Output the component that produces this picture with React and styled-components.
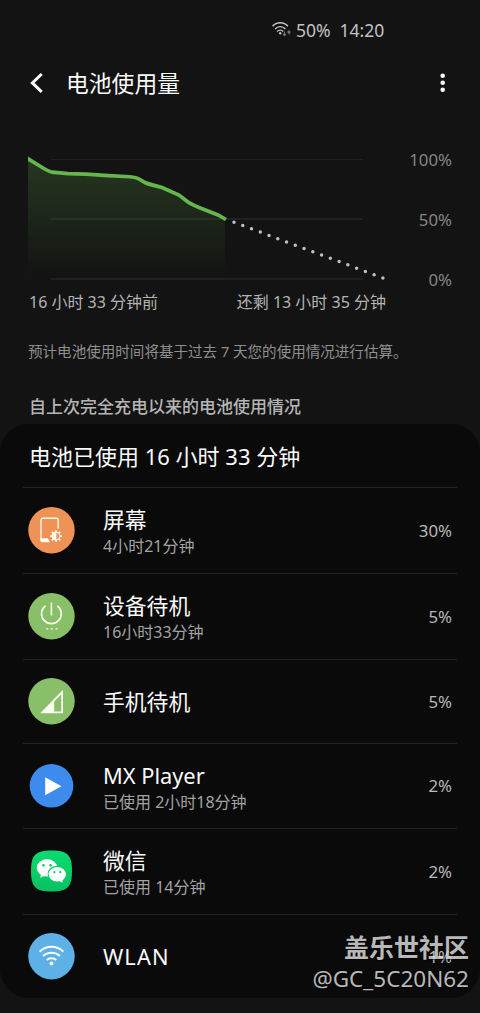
import React from "react"
import styled, { createGlobalStyle } from "styled-components"

const GlobalStyle = createGlobalStyle`
    * {
        box-sizing: border-box;
    }

    body {
        margin: 0;
        background: #131313;
        color: #fafafa;
        font-family: "Noto Sans", "Noto Sans CJK SC", sans-serif;
    }
`

const Screen = styled.div`
    position: relative;
    width: 480px;
    height: 1013px;
    overflow: hidden;
    background: #131313;
    white-space: nowrap;
`

const StatusBar = styled.div`
    display: flex;
    align-items: center;
    height: 60px;
    padding: 0 0 0 272px;
    font-size: 17.5px;
    color: #c2c2c2;
`

const StatusText = styled.span`
    margin-left: ${props => props.$gap}px;
`

const Header = styled.header`
    display: flex;
    align-items: center;
    height: 46px;
    padding: 0 33px 0 29px;
`

const Title = styled.h1`
    flex: 1;
    margin: 0 0 0 21px;
    padding-top: 1px;
    font-size: 22.8px;
    font-weight: 400;
    line-height: 46px;
`

const ChartSection = styled.section`
    display: flex;
    justify-content: space-between;
    height: 182px;
    padding: 44px 28px 0 28px;
`

const ChartColumn = styled.div`
    width: 360px;
`

const ChartSvg = styled.svg`
    display: block;
`

const TimeLabels = styled.div`
    display: flex;
    justify-content: space-between;
    padding: 0 2px 0 1px;
    font-size: 16px;
    line-height: 24px;
    color: #b4b4b4;
`

const Scale = styled.div`
    display: flex;
    flex-direction: column;
    justify-content: space-between;
    height: 144px;
    margin-top: -2px;
    font-size: 16.8px;
    line-height: 24px;
    text-align: right;
    color: #858585;
`

const Note = styled.p`
    margin: 0;
    padding: 51px 28px 1px;
    font-size: 14.55px;
    line-height: 24px;
    color: #8f8f8f;
`

const SectionTitle = styled.h2`
    margin: 0;
    padding: 30px 29px 5px;
    font-size: 17px;
    font-weight: 500;
    line-height: 25px;
    color: #b5b5b5;
`

const Card = styled.main`
    height: 574px;
    padding: 0 23px;
    border-radius: 29px;
    background: #0a0a0a;
`

const CardTitle = styled.h3`
    height: 64px;
    margin: 0;
    padding-left: 6px;
    border-bottom: 1px solid #232323;
    font-size: 22px;
    font-weight: 400;
    line-height: 64px;
`

const Row = styled.div`
    display: flex;
    align-items: center;
    height: ${props => props.$height}px;
    padding: 0 5px;
    border-bottom: 1px solid ${props => props.$last ? "transparent" : "#232323"};
`

const IconSvg = styled.svg`
    flex: none;
    display: block;
`

const RowText = styled.div`
    flex: 1;
    margin-left: 28px;
    padding-top: ${props => props.$twoLines ? 3 : 0}px;
`

const AppName = styled.div`
    font-size: 21.8px;
    line-height: 28px;
    letter-spacing: ${props => props.$spacing || 0}px;
`

const AppTime = styled.div`
    font-size: 16px;
    line-height: 24px;
    color: #a3a3a3;
`

const Percent = styled.div`
    font-size: 16.8px;
    line-height: 24px;
    color: #b8b8b8;
`

const Watermark = styled.div`
    position: absolute;
    right: 11px;
    top: 930px;
    text-align: right;
    color: rgba(255, 255, 255, 0.72);
    text-shadow: 1px 1px 1px rgba(0, 0, 0, 0.5);
`

const Community = styled.div`
    font-size: 25px;
    font-weight: 700;
    line-height: 34px;
`

const UserName = styled.div`
    font-size: 22.5px;
    line-height: 30px;
`

const StatusWifi = () => (
    <IconSvg width="20" height="16" viewBox="0 0 20 16" fill="none" stroke="#c2c2c2" strokeWidth="1.4">
        <path d="M.6 4.2C4.5-.4 12-.4 15.8 4.2M3 7c2.800-3.200 7.600-3.200 10.400 0M5.200 9.500c1.700-1.900 4.300-1.900 6 0" />
        <circle cx="8.2" cy="11.2" r="1.2" fill="#c2c2c2" stroke="none" />
        <path d="M12.500 9.500v4M11 12l1.500 1.500 1.500-1.500M17 12.500V9M15.500 10.500L17 9l1.500 1.500" stroke="#707070" strokeWidth="1.3" />
    </IconSvg>
)

const BackIcon = () => (
    <IconSvg width="16" height="24" viewBox="0 0 16 24" fill="none" stroke="#fafafa" strokeWidth="3">
        <path d="M12.700 3L3.400 11.900l9.300 8.900" />
    </IconSvg>
)

const MoreIcon = () => (
    <IconSvg width="8" height="20" viewBox="0 0 8 20" fill="#fafafa">
        <circle cx="3.7" cy="2.7" r="2.3" />
        <circle cx="3.7" cy="9.7" r="2.3" />
        <circle cx="3.7" cy="16.8" r="2.3" />
    </IconSvg>
)

const ScreenIcon = () => (
    <IconSvg width="47" height="47" viewBox="0 0 47 47">
        <circle cx="23.5" cy="23.2" r="23.2" fill="#ef9255" />
        <path d="M30.200 21.500V13q0-1.700-1.700-1.700H14.700q-1.700 0-1.700 1.700v20" fill="none" stroke="#fff7e8" strokeWidth="1.4" />
        <path d="M12.300 31.300h7.500l2.200 3.900H14q-1.700 0-1.700-1.700z" fill="#fffaf0" />
        <path d="M28 23.200V35M22.100 29.100h11.800M23.800 24.900l8.400 8.400M32.200 24.900l-8.400 8.400" stroke="#fffaf0" strokeWidth="1.7" />
        <circle cx="28" cy="29.1" r="4.5" fill="#fffaf0" />
        <path d="M28.300 26a3.100 3.100 0 010 6.200z" fill="#ef9255" />
    </IconSvg>
)

const PowerIcon = () => (
    <IconSvg width="47" height="47" viewBox="0 0 47 47" fill="none" stroke="#f7fbe8" strokeWidth="1.6">
        <circle cx="23.5" cy="23.2" r="23.2" fill="#89bf69" stroke="none" />
        <path d="M17.500 12.800a9.900 9.900 0 1011.800 0M23.400 9.500v13" />
        <path d="M18.200 35.800h2M22.700 35.800h2M27.500 35.800h2" strokeWidth="1.2" />
    </IconSvg>
)

const SignalIcon = () => (
    <IconSvg width="47" height="47" viewBox="0 0 47 47">
        <circle cx="23.5" cy="23.2" r="23.2" fill="#89bf69" />
        <path d="M12.200 35.200L35 11.700v23.500z" fill="#fafcf0" />
        <path d="M26.200 23.600l7-7v17h-7z" fill="#89bf69" />
    </IconSvg>
)

const PlayerIcon = () => (
    <IconSvg width="47" height="47" viewBox="0 0 47 47">
        <circle cx="23.5" cy="22.8" r="21.8" fill="#3d8bed" />
        <path d="M17.200 14.300L33.500 23.300 17.200 32.300z" fill="#fff" />
    </IconSvg>
)

const WechatIcon = () => (
    <IconSvg width="47" height="47" viewBox="0 0 47 47">
        <defs>
            <linearGradient id="wechat" x1="0" y1="0" x2="0" y2="1">
                <stop offset="0" stopColor="#08dc70" />
                <stop offset="1" stopColor="#08c160" />
            </linearGradient>
        </defs>
        <path d="M23.500 2.500C39.500 2.500 44 7 44 23S39.500 43.500 23.500 43.500 3 39 3 23 7.500 2.500 23.500 2.500z" fill="url(#wechat)" />
        <ellipse cx="19" cy="19.8" rx="10.3" ry="8.7" fill="#fff" />
        <path d="M13 25.500l-.7 4.200 5-2.200z" fill="#fff" />
        <ellipse cx="29.1" cy="26" rx="9.5" ry="8.2" fill="#08ce68" />
        <ellipse cx="29.3" cy="26.3" rx="8.7" ry="7.3" fill="#fff" />
        <path d="M30.500 32.500l4.200 2.200-.7-4z" fill="#fff" />
        <g fill="#08ce68">
            <circle cx="15.5" cy="17.2" r="1.3" />
            <circle cx="22.5" cy="17.2" r="1.3" />
            <circle cx="26.4" cy="24.2" r="1.1" />
            <circle cx="32.2" cy="24.2" r="1.1" />
        </g>
    </IconSvg>
)

const WlanIcon = () => (
    <IconSvg width="47" height="47" viewBox="0 0 47 47" fill="none" stroke="#f8fcff" strokeWidth="2">
        <circle cx="23.5" cy="23.2" r="23.2" fill="#5eb1e7" stroke="none" />
        <path d="M11.600 18.800c6.600-6.600 17.200-6.600 23.800 0M15 23c4.700-4.500 12.300-4.500 17 0M18.700 27c2.700-2.300 6.900-2.300 9.600 0" />
        <circle cx="23.5" cy="30.5" r="1.9" fill="#fff" stroke="none" />
    </IconSvg>
)

const BatteryChart = () => (
    <ChartSvg width="360" height="140" viewBox="0 0 360 140">
        <defs>
            <linearGradient id="usage" x1="0" y1="0" x2="0" y2="1">
                <stop offset="0" stopColor="#62b548" stopOpacity=".23" />
                <stop offset="1" stopColor="#62b548" stopOpacity="0" />
            </linearGradient>
        </defs>
        <path d="M23 9.500H335" stroke="#202020" />
        <path d="M23 69H335M23 129H335" stroke="#202020" strokeWidth="2" />
        <path d="M0 9L22 22 110 28 135 36 151 44 162 53 197 69V127H0z" fill="url(#usage)" />
        <path
            d="M-2 7.500L11 15.500Q20 21.200 24 22.200L40 23.700L58 24.200L80 25.700L97 26.500Q108 27 111 29L118 33Q120 34 134 37.500L151 45L160 52Q163 54 171 57.500L190 65L198 69.500"
            fill="none"
            stroke="#65b64c"
            strokeWidth="3.7"
        />
        <path d="M206 72.300L355.500 128.200" stroke="#bac2c7" strokeWidth="3.5" strokeLinecap="round" strokeDasharray="0 9.35" />
    </ChartSvg>
)

const apps = [
    { name: "屏幕", time: "4小时21分钟", percent: "30%", icon: <ScreenIcon />, height: 86 },
    { name: "设备待机", time: "16小时33分钟", percent: "5%", icon: <PowerIcon />, height: 86 },
    { name: "手机待机", percent: "5%", icon: <SignalIcon />, height: 84 },
    { name: "MX Player", time: "已使用 2小时18分钟", percent: "2%", icon: <PlayerIcon />, height: 85 },
    { name: "微信", time: "已使用 14分钟", percent: "2%", icon: <WechatIcon />, height: 86 },
    { name: "WLAN", percent: "1%", icon: <WlanIcon />, height: 84, spacing: 1.1, last: true },
]

const App = () => (
    <>
        <GlobalStyle />
        <Screen>
            <StatusBar>
                <StatusWifi />
                <StatusText $gap={4}>50%</StatusText>
                <StatusText $gap={9}>14:20</StatusText>
            </StatusBar>
            <Header>
                <BackIcon />
                <Title>电池使用量</Title>
                <MoreIcon />
            </Header>
            <ChartSection>
                <ChartColumn>
                    <BatteryChart />
                    <TimeLabels>
                        <span>16 小时 33 分钟前</span>
                        <span>还剩 13 小时 35 分钟</span>
                    </TimeLabels>
                </ChartColumn>
                <Scale>
                    <span>100%</span>
                    <span>50%</span>
                    <span>0%</span>
                </Scale>
            </ChartSection>
            <Note>预计电池使用时间将基于过去 7 天您的使用情况进行估算。</Note>
            <SectionTitle>自上次完全充电以来的电池使用情况</SectionTitle>
            <Card>
                <CardTitle>电池已使用 16 小时 33 分钟</CardTitle>
                {apps.map(app => (
                    <Row key={app.name} $height={app.height} $last={app.last}>
                        {app.icon}
                        <RowText $twoLines={Boolean(app.time)}>
                            <AppName $spacing={app.spacing}>{app.name}</AppName>
                            {app.time && <AppTime>{app.time}</AppTime>}
                        </RowText>
                        <Percent>{app.percent}</Percent>
                    </Row>
                ))}
            </Card>
            <Watermark>
                <Community>盖乐世社区</Community>
                <UserName>@GC_5C20N62</UserName>
            </Watermark>
        </Screen>
    </>
)

export default App
